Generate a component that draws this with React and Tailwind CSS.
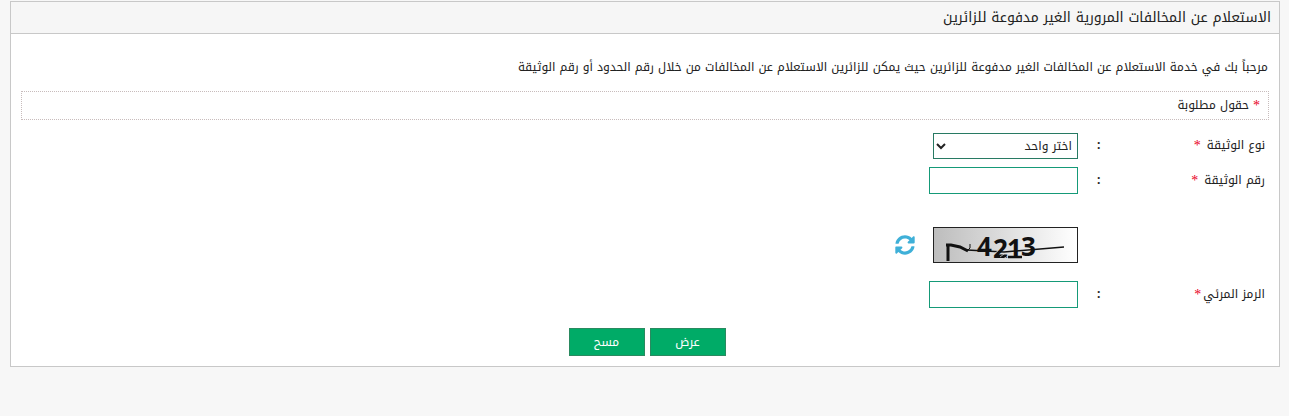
import React, { useState } from 'react';
import { FaSyncAlt } from 'react-icons/fa';

const Required = () => (
  <span className="font-['Liberation_Serif',serif] text-sm leading-[22px] text-[#e8001c]">*</span>
);

const Label = ({ htmlFor, compact, children }) => (
  <div className="flex h-[22px] w-42 items-start justify-between leading-5">
    <label htmlFor={htmlFor} className={compact ? 'flex gap-0.5' : 'flex gap-1.5'}>
      {children}
      <Required />
    </label>
    <span className="font-bold">:</span>
  </div>
);

const Captcha = () => (
  <svg
    viewBox="0 0 143 34"
    role="img"
    aria-label="4213"
    direction="ltr"
    className="h-9 w-[145px] overflow-visible border border-[#222222]"
  >
    <defs>
      <linearGradient id="captcha-bg" x1="0" x2="1" y1="0" y2="0">
        <stop offset="0" stopColor="#bdbdbd" />
        <stop offset="1" stopColor="#ffffff" />
      </linearGradient>
    </defs>
    <rect width="143" height="34" fill="url(#captcha-bg)" />
    <g fill="#111111" fontFamily="Open Sans, sans-serif" fontSize="26" fontWeight="700">
      <text x="43" y="28">4</text>
      <text x="59" y="30">2</text>
      <text x="73" y="30">1</text>
      <text x="87" y="28">3</text>
    </g>
    <g fill="none" stroke="#111111">
      <path d="M14 33 14 18" strokeWidth="3" />
      <path d="M12 17 17 17 26 19 34 23" strokeWidth="3" />
      <path d="M36 16 36 20 33 23" strokeWidth="1" />
      <path d="M33 22 70 24 130 19" strokeWidth="1.5" />
      <path d="M74 29 88 29" strokeWidth="2.5" />
    </g>
    <path
      d="M61 25 64 23M66 29 70 26M69 31 74 28"
      fill="none"
      stroke="#d0d0d0"
      strokeWidth="0.8"
    />
  </svg>
);

const App = () => {
  const [documentType, setDocumentType] = useState('');
  const [documentNumber, setDocumentNumber] = useState('');
  const [code, setCode] = useState('');

  const handleClear = () => {
    setDocumentType('');
    setDocumentNumber('');
    setCode('');
  };

  return (
    <div
      dir="rtl"
      className="min-h-screen bg-[#f7f7f7] pl-[10px] pr-[9px] pt-px font-['Noto_Kufi_Arabic','Noto_Sans_Arabic','DejaVu_Sans',sans-serif] text-xs text-[#222222]"
    >
      <section className="border border-[#c8c8c8] bg-white">
        <h1 className="flex h-8 items-center border-b border-[#c8c8c8] bg-[#f6f6f6] px-2 text-sm font-normal">
          الاستعلام عن المخالفات المرورية الغير مدفوعة للزائرين
        </h1>

        <form className="px-[10px] pb-[10px] pt-[23px]" onSubmit={(e) => e.preventDefault()}>
          <p className="h-[34px] px-px leading-5">
            مرحباً بك في خدمة الاستعلام عن المخالفات الغير مدفوعة للزائرين حيث يمكن للزائرين الاستعلام عن المخالفات من خلال رقم الحدود أو رقم الوثيقة
          </p>

          <div className="flex h-[29px] gap-1 border border-dotted border-[#c8bcbc] px-2 pt-[3px] leading-5">
            <Required />
            حقول مطلوبة
          </div>

          {/* Fields */}
          <div className="flex flex-col px-1 pt-[13px]">
            <div className="mb-2 flex items-center gap-[19px]">
              <Label htmlFor="document-type">نوع الوثيقة</Label>
              <select
                id="document-type"
                value={documentType}
                onChange={(e) => setDocumentType(e.target.value)}
                className="h-[26px] w-[145px] border border-[#287a63] bg-white px-px"
              >
                <option value="">اختر واحد</option>
                <option value="border">رقم الحدود</option>
                <option value="document">رقم الوثيقة</option>
              </select>
            </div>

            <div className="flex items-center gap-[19px]">
              <Label htmlFor="document-number">رقم الوثيقة</Label>
              <input
                id="document-number"
                type="text"
                value={documentNumber}
                onChange={(e) => setDocumentNumber(e.target.value)}
                className="h-[27px] w-[149px] border border-[#159a78] bg-white px-1"
              />
            </div>

            <div className="mb-[18px] mt-[33px] flex items-center gap-[18px] ps-[187px]">
              <Captcha />
              <button type="button" aria-label="تحديث الرمز" className="text-[#3fb0d8]">
                <FaSyncAlt className="size-5" />
              </button>
            </div>

            <div className="flex items-center gap-[19px]">
              <Label htmlFor="visual-code" compact>الرمز المرئي</Label>
              <input
                id="visual-code"
                type="text"
                value={code}
                onChange={(e) => setCode(e.target.value)}
                className="h-[27px] w-[149px] border border-[#159a78] bg-white px-1"
              />
            </div>
          </div>

          {/* Actions */}
          <div className="mt-5 flex justify-center gap-[5px] pl-1">
            <button type="submit" className="h-7 w-[76px] border border-[#2a8a60] bg-[#00ab67] text-white">
              عرض
            </button>
            <button
              type="button"
              onClick={handleClear}
              className="h-7 w-[76px] border border-[#2a8a60] bg-[#00ab67] text-white"
            >
              مسح
            </button>
          </div>
        </form>
      </section>
    </div>
  );
};

export default App;
